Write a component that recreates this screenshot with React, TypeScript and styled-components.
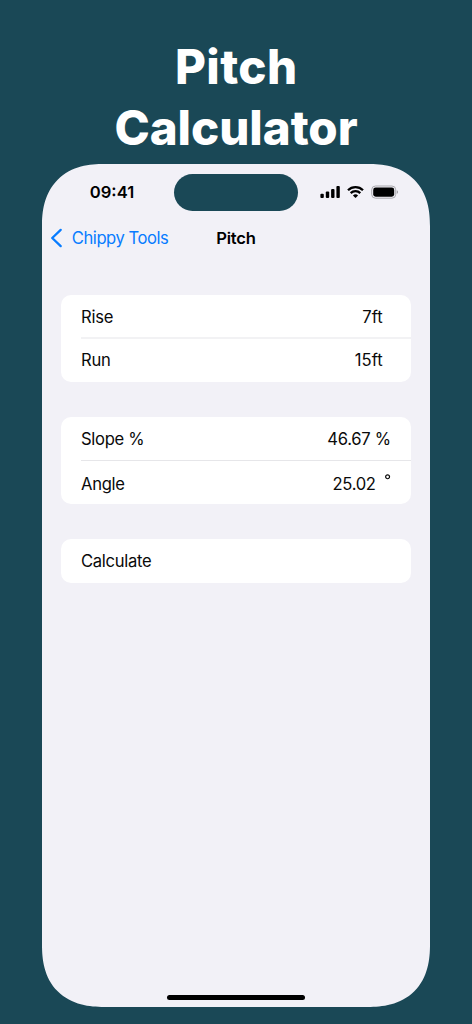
import React from "react";
import styled, { createGlobalStyle } from "styled-components";

const GlobalStyle = createGlobalStyle`
  * { box-sizing: border-box; }
  body { margin: 0; background: #1a4856; font-family: Inter, "Liberation Sans", sans-serif; }
`;

const Page = styled.main`
  width: 472px;
  height: 1024px;
  display: flex;
  flex-direction: column;
  align-items: center;
  background: #1a4856;
  overflow: hidden;
`;

const Title = styled.h1`
  margin: 0;
  padding-top: 36px;
  height: 163.5px;
  display: flex;
  flex-direction: column;
  align-items: center;
  flex-shrink: 0;
  color: #fff;
  font-size: 47.5px;
  font-weight: 800;
  line-height: 61px;
`;

const TitleLine = styled.span<{ $spacing: number }>`
  letter-spacing: ${(p) => p.$spacing}px;
  margin-right: ${(p) => -p.$spacing}px;
`;

const Phone = styled.section`
  width: 388.4px;
  height: 843.5px;
  flex-shrink: 0;
  display: flex;
  flex-direction: column;
  background: #f2f1f7;
  border-radius: 62px;
  corner-shape: superellipse(1.25);
  overflow: hidden;
`;

const StatusBar = styled.div`
  height: 57.5px;
  padding: 10.5px 32px 0 0;
  display: grid;
  grid-template-columns: 132px 124px 1fr;
  flex-shrink: 0;
`;

const Clock = styled.span`
  padding-left: 48px;
  padding-top: 8px;
  font-size: 16.6px;
  line-height: 20px;
  font-weight: 600;
  letter-spacing: 0;
`;

const Island = styled.div`
  height: 37px;
  border-radius: 19px;
  background: #1a4856;
`;

const StatusIcons = styled.div`
  padding-top: 11px;
  display: flex;
  justify-content: flex-end;
  align-items: flex-start;
`;

const NavBar = styled.header`
  height: 34px;
  display: grid;
  grid-template-columns: 1fr auto 1fr;
  align-items: center;
  flex-shrink: 0;
  padding: 0 8px;
  font-size: 16.6px;
`;

const BackButton = styled.button`
  display: flex;
  align-items: center;
  gap: 9px;
  padding: 0;
  border: 0;
  background: none;
  color: #087cff;
  font: inherit;
  letter-spacing: -0.45px;
  white-space: nowrap;
`;

const NavTitle = styled.h2`
  margin: 0;
  font-size: 16.6px;
  font-weight: 600;
  letter-spacing: -0.2px;
`;

const Groups = styled.div`
  padding: 39.5px 19.5px 0;
  display: flex;
  flex-direction: column;
  gap: 35px;
  flex: 1;
`;

const Card = styled.div`
  border-radius: 10px;
  background: #fff;
  overflow: hidden;
`;

const Row = styled.div<{ $inset?: number; $drop?: number; $divider?: string; $height?: number }>`
  height: ${(p) => p.$height ?? 43.7}px;
  margin-left: 19.7px;
  padding-right: ${(p) => p.$inset ?? 20}px;
  padding-top: ${(p) => p.$drop ?? 0}px;
  display: flex;
  align-items: center;
  justify-content: space-between;
  border-bottom: ${(p) => p.$divider ?? "0"};
  font-size: 16.6px;
  line-height: 20px;
  color: #0a0a0a;
`;

const Text = styled.span<{ $spacing?: number }>`
  letter-spacing: ${(p) => p.$spacing ?? -0.3}px;
`;

const Reading = styled.span`
  display: flex;
  align-items: flex-start;
  gap: 9px;
`;

const HomeIndicator = styled.div`
  width: 138.4px;
  height: 5px;
  margin: 0 auto 7.5px;
  border-radius: 3px;
  background: #000;
`;

const BackIcon = () => (
  <svg width="13" height="20" viewBox="0 0 13 20" fill="none">
    <path d="M10.7 1.9 2.2 10l8.5 8.1" stroke="currentColor" strokeWidth="2.3" strokeLinecap="round" strokeLinejoin="round" />
  </svg>
);

const StatusGlyphs = () => (
  <svg width="78" height="16" viewBox="0 0 78 16">
    <rect x="0.4" y="8.8" width="3.4" height="4.2" rx="1" />
    <rect x="5.8" y="6.6" width="3.4" height="6.4" rx="1" />
    <rect x="11.1" y="3.9" width="3.4" height="9.1" rx="1" />
    <rect x="16.4" y="1" width="3.4" height="12" rx="1" />
    <g fill="none" stroke="#000" strokeWidth="2.3">
      <path d="M28 5.2a10.7 10.7 0 0 1 15 0" />
      <path d="M30.7 8.1a6.8 6.8 0 0 1 9.6 0" />
    </g>
    <path d="M35.5 13.1 32.9 10.4a3.8 3.8 0 0 1 5.2 0z" />
    <rect x="51.7" y="1" width="24" height="12.2" rx="3.8" fill="none" stroke="#aaa9ae" strokeWidth="1" />
    <rect x="53.2" y="2.5" width="21" height="9.2" rx="2.4" />
    <path d="M76.8 5.2c1.4.6 1.4 3.2 0 3.8z" fill="#8e8d92" />
  </svg>
);

const DegreeIcon = () => (
  <svg width="6" height="20" viewBox="0 0 6 20" fill="none">
    <circle cx="2.6" cy="2.8" r="1.95" stroke="#0a0a0a" strokeWidth="1.2" />
  </svg>
);

export default function App() {
  return (
    <Page>
      <GlobalStyle />
      <Title>
        <TitleLine $spacing={0.4}>Pitch</TitleLine>
        <TitleLine $spacing={-0.05}>Calculator</TitleLine>
      </Title>
      <Phone>
        <StatusBar>
          <Clock>09:41</Clock>
          <Island />
          <StatusIcons>
            <StatusGlyphs />
          </StatusIcons>
        </StatusBar>
        <NavBar>
          <BackButton>
            <BackIcon />
            Chippy Tools
          </BackButton>
          <NavTitle>Pitch</NavTitle>
          <span />
        </NavBar>
        <Groups>
          <Card>
            <Row $inset={28} $drop={2.5} $height={44.4} $divider="2px solid #f2f2f4">
              <Text $spacing={-0.25}>Rise</Text>
              <Text $spacing={0}>7ft</Text>
            </Row>
            <Row $inset={28} $height={43}>
              <Text $spacing={-0.25}>Run</Text>
              <Text $spacing={0}>15ft</Text>
            </Row>
          </Card>
          <Card>
            <Row $drop={1.5} $divider="1px solid #e6e6e9">
              <Text>Slope %</Text>
              <Text>46.67 %</Text>
            </Row>
            <Row $drop={4}>
              <Text>Angle</Text>
              <Reading>
                <Text>25.02</Text>
                <DegreeIcon />
              </Reading>
            </Row>
          </Card>
          <Card>
            <Row $drop={0.5}>
              <Text>Calculate</Text>
            </Row>
          </Card>
        </Groups>
        <HomeIndicator />
      </Phone>
    </Page>
  );
}
